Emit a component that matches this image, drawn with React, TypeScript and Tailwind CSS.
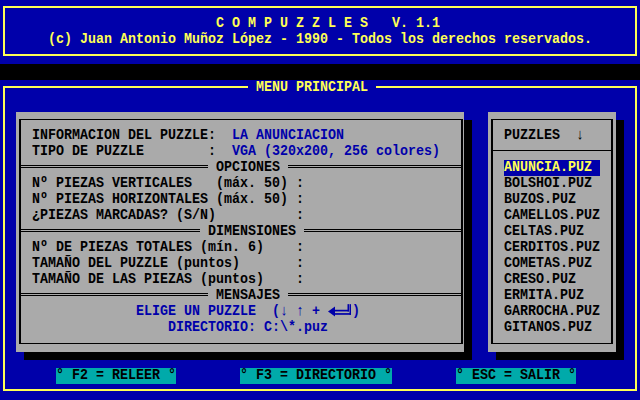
import React from 'react';

// colores de la paleta VGA de 16 colores
const font = "font-['Liberation_Mono',monospace] text-[13.33px] leading-[16px] font-bold";
const alto = 'inline-block scale-y-112 whitespace-pre';

const menuOpciones = [
  'Nº PIEZAS VERTICALES   (máx. 50) :',
  'Nº PIEZAS HORIZONTALES (máx. 50) :',
  '¿PIEZAS MARCADAS? (S/N)          :',
];

const menuDimensiones = [
  'Nº DE PIEZAS TOTALES (mín. 6)    :',
  'TAMAÑO DEL PUZZLE (puntos)       :',
  'TAMAÑO DE LAS PIEZAS (puntos)    :',
];

const puzzles = [
  'ANUNCIA.PUZ', 'BOLSHOI.PUZ', 'BUZOS.PUZ', 'CAMELLOS.PUZ', 'CELTAS.PUZ', 'CERDITOS.PUZ',
  'COMETAS.PUZ', 'CRESO.PUZ', 'ERMITA.PUZ', 'GARROCHA.PUZ', 'GITANOS.PUZ',
];

const Separador: React.FC<{ titulo: string; izq: string }> = ({ titulo, izq }) => (
  <div className="flex h-[16px]">
    <div className={`${izq} h-[3px] mt-[5px] border-y border-black`} />
    <span className="px-[8px]"><span className={alto}>{titulo}</span></span>
    <div className="flex-1 h-[3px] mt-[5px] border-y border-black" />
  </div>
);

const Intro = () => (
  <svg width="24" height="16" viewBox="0 0 24 16" className="inline-block align-top" fill="#0000AA">
    <polygon points="0,7.5 7,3 7,12" />
    <rect x="6" y="6" width="15" height="1.5" />
    <rect x="6" y="9" width="17" height="1.5" />
    <rect x="19.5" y="1" width="1.5" height="6.5" />
    <rect x="21.5" y="1" width="1.5" height="9.5" />
  </svg>
);

export default function App() {
  return (
    <div className={`w-[640px] h-[400px] bg-[#0000AA] flex flex-col overflow-hidden ${font}`}>
      {/* cabecera */}
      <div className="h-[64px]">
        <div className="mt-[6px] mx-[3px] h-[50px] border-2 border-[#FFFF55] pt-[8px] text-[#FFFF55]">
          <div className="ml-[211px]"><span className={alto}>C O M P U Z Z L E S   V. 1.1</span></div>
          <div className="ml-[43px]"><span className={alto}>(c) Juan Antonio Muñoz López - 1990 - Todos los derechos reservados.</span></div>
        </div>
      </div>
      <div className="h-[16px] bg-black" />

      {/* menu principal */}
      <div className="mt-[6px] mx-[3px] h-[305px] border-2 border-[#FFFF55]">
        <div className="-mt-[8px] h-[16px] flex">
          <span className="ml-[243px] px-[8px] bg-[#0000AA] text-[#FFFF55]"><span className={alto}>MENU PRINCIPAL</span></span>
        </div>

        <div className="mt-[16px] ml-[11px] flex gap-[24px]">
          {/* panel izquierdo */}
          <div className="w-[448px] h-[240px] bg-[#AAAAAA] shadow-[8px_8px_0_0_#000] pt-[7px] text-black">
            <div className="ml-[3px] w-[444px] h-[225px] border-x-2 border-y border-black pt-[8px]">
              <div className="pl-[11px] h-[16px]">
                <span className={alto}>INFORMACION DEL PUZZLE:  <span className="text-[#0000AA]">LA ANUNCIACION</span></span>
              </div>
              <div className="pl-[11px] h-[16px]">
                <span className={alto}>TIPO DE PUZZLE        :  <span className="text-[#0000AA]">VGA (320x200, 256 colores)</span></span>
              </div>
              <Separador titulo="OPCIONES" izq="w-[187px]" />
              {menuOpciones.map(t => (
                <div key={t} className="pl-[11px] h-[16px]"><span className={alto}>{t}</span></div>
              ))}
              <Separador titulo="DIMENSIONES" izq="w-[179px]" />
              {menuDimensiones.map(t => (
                <div key={t} className="pl-[11px] h-[16px]"><span className={alto}>{t}</span></div>
              ))}
              <Separador titulo="MENSAJES" izq="w-[187px]" />
              <div className="pl-[115px] h-[16px] text-[#0000AA]">
                <span className={alto}>ELIGE UN PUZZLE  (↓ ↑ + <Intro />)</span>
              </div>
              <div className="pl-[147px] h-[16px] text-[#0000AA]">
                <span className={alto}>DIRECTORIO: C:\*.puz</span>
              </div>
            </div>
          </div>

          {/* lista de puzzles */}
          <div className="w-[128px] h-[240px] bg-[#AAAAAA] shadow-[8px_8px_0_0_#000] pt-[7px] text-black">
            <div className="ml-[3px] w-[122px] h-[225px] border-x-2 border-y border-black pt-[8px]">
              <div className="pl-[11px] h-[16px]"><span className={alto}>PUZZLES  ↓</span></div>
              <div className="h-[16px] pt-[6px]">
                <div className="h-[1px] bg-black" />
              </div>
              {puzzles.map((p, i) => (
                <div key={p} className="pl-[11px] h-[16px]">
                  <span className={i === 0 ? 'inline-block w-[96px] bg-[#0000AA] text-[#FFFF55]' : ''}>
                    <span className={alto}>{p}</span>
                  </span>
                </div>
              ))}
            </div>
          </div>
        </div>

        {/* teclas */}
        <div className="mt-[16px] ml-[51px] flex gap-[64px] text-black">
          <span className="bg-[#00AAAA]"><span className={alto}>° F2 = RELEER °</span></span>
          <span className="bg-[#00AAAA]"><span className={alto}>° F3 = DIRECTORIO °</span></span>
          <span className="bg-[#00AAAA]"><span className={alto}>° ESC = SALIR °</span></span>
        </div>
      </div>
    </div>
  );
}
